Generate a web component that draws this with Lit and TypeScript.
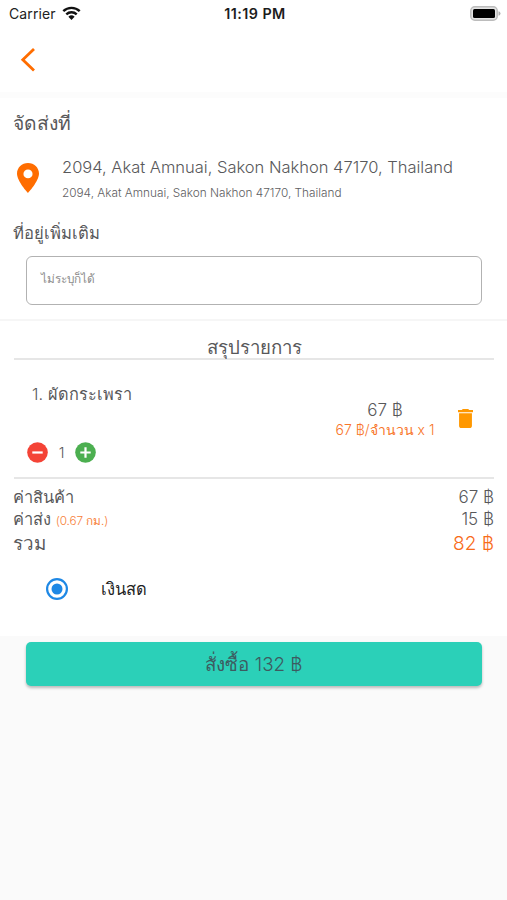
import { LitElement, html, css } from "lit";
import { customElement, state } from "lit/decorators.js";

@customElement("app-root")
export class AppRoot extends LitElement {
  static styles = css`
    :host {
      display: block;
      height: 900px;
      background: #fafafa;
      color: #58585a;
      font-family: Inter, sans-serif;
      font-weight: 300;
      overflow: hidden;
    }
    * { box-sizing: border-box; }
    svg { display: block; flex: none; }
    .status {
      height: 28px;
      background: #fff;
      color: #222;
      display: grid;
      grid-template-columns: 1fr auto 1fr;
      align-items: center;
      padding: 0 6px 2px 9px;
      font-size: 14px;
      font-weight: 400;
    }
    .carrier { display: flex; align-items: center; gap: 6px; }
    .carrier span { letter-spacing: 0.1px; }
    .clock { font-weight: 600; font-size: 14.3px; letter-spacing: 0.45px; color: #1c1c1c; }
    .battery { justify-self: end; }
    .nav { height: 64px; background: #fff; padding: 19px 0 0 20px; }
    .band { height: 6px; background: #fcfcfc; }
    .address { height: 221px; background: #fff; padding-top: 13px; }
    .heading { font-size: 19.3px; line-height: 24px; padding-left: 13px; }
    .place { display: flex; height: 50px; margin-top: 19px; padding: 9px 0 0 17px; }
    .lines { margin: -8px 0 0 23px; white-space: nowrap; }
    .main { font-size: 16.5px; line-height: 24px; }
    .sub { font-size: 11.8px; line-height: 14px; margin-top: 7px; color: #606062; }
    .more { font-size: 16.6px; line-height: 24px; padding-left: 13px; margin-top: 17px; }
    .field {
      margin: 11px 25px 0 26px;
      height: 49px;
      border: 1.5px solid #b2b2b2;
      border-radius: 6px;
      padding: 12px 13px 12px 14px;
      font-size: 11.8px;
      line-height: 20px;
      color: #8c8c8c;
    }
    .summary { background: #fff; border-top: 2px solid #f6f6f6; height: 317px; padding: 0 13px 0 14px; }
    .title { height: 39px; border-bottom: 2px solid #e6e6e6; text-align: center; font-size: 18.6px; line-height: 24px; padding-top: 14px; }
    .item { height: 119px; border-bottom: 2px solid #e6e6e6; display: flex; }
    .left { flex: 1; padding: 22px 0 0 13px; }
    .name { font-size: 16.3px; line-height: 24px; padding-left: 5px; }
    .qty { display: flex; align-items: center; gap: 10px; margin-top: 35px; height: 22px; font-size: 14.5px; }
    .qty b { font-weight: 300; width: 7px; text-align: center; }
    .price { width: 102px; text-align: center; padding-top: 39px; white-space: nowrap; }
    .sum { font-size: 17px; line-height: 22px; }
    .unit { font-size: 14px; line-height: 18px; color: #f8762a; }
    .trash { margin: 49px 21px 0 22px; }
    .row { display: flex; justify-content: space-between; align-items: center; height: 22px; font-size: 17px; margin-left: -1px; }
    .row.first { margin-top: 7px; }
    .row.total { height: 26px; font-size: 19px; }
    .label { font-size: 16.4px; }
    .total .label { font-size: 18.8px; }
    .total .amount { color: #f86c1a; }
    .km { font-size: 11.8px; color: #f8823a; letter-spacing: -0.1px; }
    .pay { display: flex; align-items: center; padding-left: 32px; height: 24px; margin-top: 21px; color: #222; font-size: 16.5px; gap: 33px; }
    .order {
      margin: 6px 25px 0 26px;
      height: 44px;
      border-radius: 5px;
      background: #2bd0b8;
      box-shadow: 0 2px 3px rgba(0, 0, 0, 0.26);
      display: flex;
      align-items: center;
      justify-content: center;
      color: #3d5b60;
      font-size: 18.8px;
    }
  `;

  @state() private quantity = 1;

  render() {
    return html`
      <div class="status">
        <div class="carrier">
          <span>Carrier</span>
          <svg width="19" height="14" viewBox="0 0 19 14" fill="none" stroke="#111" stroke-width="2.4">
            <path d="M1.3 5.2a11.7 11.7 0 0 1 16.4 0M4.3 8.3a7.5 7.5 0 0 1 10.4 0" />
            <path d="M9.5 14 6.4 10.8a4.5 4.5 0 0 1 6.2 0z" fill="#111" stroke="none" />
          </svg>
        </div>
        <span class="clock">11:19 PM</span>
        <svg class="battery" width="31" height="15" viewBox="0 0 31 15">
          <rect x=".8" y=".8" width="26.4" height="13.4" rx="4" fill="#e4e4e4" stroke="#bcbcbc" stroke-width="1.5" />
          <rect x="3" y="3" width="22" height="9" rx="1.5" fill="#000" />
          <path d="M28.5 5.2q2 .6 2 2.3t-2 2.3z" fill="#b0b0b0" />
        </svg>
      </div>
      <div class="nav">
        <svg width="16" height="26" viewBox="0 0 16 26" fill="none" stroke="#ff6d00" stroke-width="2.8">
          <path d="M14 2 2.8 12.8 14 23.6" />
        </svg>
      </div>
      <div class="band"></div>
      <section class="address">
        <div class="heading">จัดส่งที่</div>
        <div class="place">
          <svg width="22" height="30" viewBox="5 2 14 20" preserveAspectRatio="none" fill="#ff6d00">
            <path d="M12 2C8.1 2 5 5.1 5 9c0 5.2 7 13 7 13s7-7.8 7-13c0-3.9-3.1-7-7-7zm0 10.2a2.9 2.9 0 1 1 0-5.8 2.9 2.9 0 0 1 0 5.8z" />
          </svg>
          <div class="lines">
            <div class="main">2094, Akat Amnuai, Sakon Nakhon 47170, Thailand</div>
            <div class="sub">2094, Akat Amnuai, Sakon Nakhon 47170, Thailand</div>
          </div>
        </div>
        <div class="more">ที่อยู่เพิ่มเติม</div>
        <div class="field">ไม่ระบุก็ได้</div>
      </section>
      <section class="summary">
        <div class="title">สรุปรายการ</div>
        <div class="item">
          <div class="left">
            <div class="name">1. ผัดกระเพรา</div>
            <div class="qty">
              <svg width="21" height="21" viewBox="0 0 21 21"><circle cx="10.5" cy="10.5" r="10.3" fill="#f44336" /><path d="M5.3 10.5h10.4" stroke="#fff" stroke-width="2.2" /></svg>
              <b>${this.quantity}</b>
              <svg width="21" height="21" viewBox="0 0 21 21"><circle cx="10.5" cy="10.5" r="10.3" fill="#4caf50" /><path d="M5.3 10.5h10.4M10.5 5.3v10.4" stroke="#fff" stroke-width="2.2" /></svg>
            </div>
          </div>
          <div class="price">
            <div class="sum">67 ฿</div>
            <div class="unit">67 ฿/จำนวน x ${this.quantity}</div>
          </div>
          <svg class="trash" width="15" height="19" viewBox="5 3 14 18" preserveAspectRatio="none" fill="#ff9800">
            <path d="M6 19c0 1.1.9 2 2 2h8c1.1 0 2-.9 2-2V7H6v12zM19 4h-3.5l-1-1h-5l-1 1H5v2h14V4z" />
          </svg>
        </div>
        <div class="row first"><span class="label">ค่าสินค้า</span><span>67 ฿</span></div>
        <div class="row"><span class="label">ค่าส่ง <span class="km">(0.67 กม.)</span></span><span>15 ฿</span></div>
        <div class="row total"><span class="label">รวม</span><span class="amount">82 ฿</span></div>
        <div class="pay">
          <svg width="22" height="22" viewBox="0 0 22 22"><circle cx="11" cy="11" r="9.9" fill="none" stroke="#1e88e5" stroke-width="2.2" /><circle cx="11" cy="11" r="5.5" fill="#1e88e5" /></svg>
          <span>เงินสด</span>
        </div>
      </section>
      <div class="order">สั่งซื้อ 132 ฿</div>
    `;
  }
}
